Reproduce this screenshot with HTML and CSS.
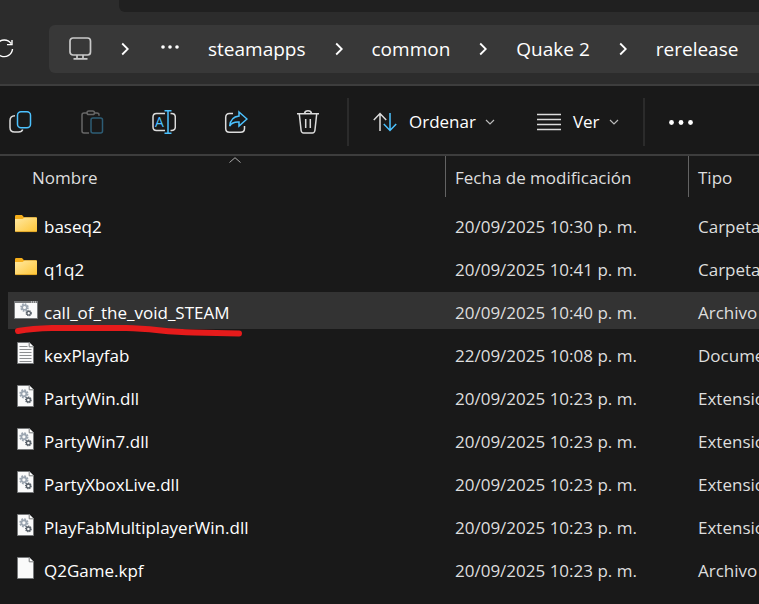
FILE: index.html
```html
<!DOCTYPE html>
<html lang="es">
<head>
<meta charset="utf-8">
<meta name="viewport" content="width=device-width, initial-scale=1">
<title>rerelease</title>
<link rel="stylesheet" href="styles.css">
</head>
<body>
<svg class="defs" aria-hidden="true">
  <symbol id="chevron" viewBox="0 0 8 14"><path d="M1.2 1.5 6.8 7 1.2 12.5" fill="none" stroke="currentColor" stroke-width="1.8"/></symbol>
  <symbol id="down" viewBox="0 0 10 6"><path d="M1 1l4 4 4-4" fill="none" stroke="currentColor" stroke-width="1.2"/></symbol>
  <symbol id="gears" viewBox="0 0 12 14">
    <circle cx="4.5" cy="4.5" r="3.2" fill="none" stroke="#9ba5b0" stroke-width="2.2" stroke-dasharray="1.5 1"/>
    <circle cx="4.5" cy="4.5" r="2.3" fill="none" stroke="#9ba5b0" stroke-width="1.6"/>
    <circle cx="8.7" cy="10.2" r="2.4" fill="none" stroke="#586069" stroke-width="1.5" stroke-dasharray="1.1 .7"/>
    <circle cx="8.7" cy="10.2" r="1.8" fill="none" stroke="#586069" stroke-width="1.2"/>
  </symbol>
  <symbol id="folder" viewBox="0 0 24 24">
    <path d="M1 4.2Q1 3 2.2 3H8l2 2.2h12q1 0 1 1V12H1z" fill="#f5ae1b"/>
    <path d="M1 7h7.5L10.500 5.500H22q1 0 1 1V19q0 1-1 1H2q-1 0-1-1z" fill="url(#folderFill)"/>
    <path d="M1.500 19.600h21" stroke="#d99c1e" stroke-width=".8"/>
  </symbol>
  <symbol id="page" viewBox="0 0 24 24">
    <path d="M3.500 1.500h12l4 4v17h-16z" fill="#fafafa" stroke="#77797b"/>
    <path d="M15.200 1.500v4.300h4.300" fill="#fff" stroke="#77797b"/>
  </symbol>
  <symbol id="text" viewBox="0 0 24 24">
    <use href="#page"/>
    <path d="M5.500 5.500h8M5.500 8.500h12M5.500 11.500h12M5.500 14.500h12M5.500 17.500h12M5.500 20.500h12" stroke="#8b8d8f"/>
  </symbol>
  <symbol id="dll" viewBox="0 0 24 24"><use href="#page"/><use href="#gears" x="5" y="5" width="13" height="15"/></symbol>
  <symbol id="batch" viewBox="0 0 24 24">
    <path d="M.5 3.500h23v17H.5z" fill="#fafafa" stroke="#77797b"/>
    <path d="M0 4h24" stroke="#77797b" stroke-width="2"/>
    <path d="M17 4h1m1 0h1m1 0h1" stroke="#eee"/>
    <use href="#gears" x="6" y="5" width="12" height="14"/>
  </symbol>
  <linearGradient id="folderFill" x1="0" y1="0" x2="1" y2="1"><stop offset="0" stop-color="#ffe9a3"/><stop offset="1" stop-color="#fec535"/></linearGradient>
</svg>

<header class="top">
  <div class="tabs"><div class="tabs-empty"></div></div>
  <div class="nav">
    <button class="refresh" aria-label="Actualizar">
      <svg width="14" height="24" viewBox="0 0 14 24" fill="none" stroke="#fff" stroke-width="1.400"><path d="M11 6.500A8.300 8.300 0 1 0 12.500 12M12 3v4.600H7"/></svg>
    </button>
    <nav class="address" aria-label="Ruta">
      <button class="crumb" aria-label="Este equipo"><svg width="24" height="24" viewBox="0 0 24 24" fill="none" stroke="#c9c9c9" stroke-width="1.700"><rect x="2" y="1" width="20.500" height="17" rx="3"/><path d="M9 18v3M15 18v3M5.500 21.800h14"/></svg></button>
      <svg class="sep"><use href="#chevron"/></svg>
      <button class="crumb more" aria-label="Mostrar carpetas"><svg width="18" height="6" fill="#fff"><circle cx="2" cy="3" r="1.800"/><circle cx="9" cy="3" r="1.800"/><circle cx="16" cy="3" r="1.800"/></svg></button>
      <a class="crumb" href="#">steamapps</a>
      <svg class="sep"><use href="#chevron"/></svg>
      <a class="crumb" href="#">common</a>
      <svg class="sep"><use href="#chevron"/></svg>
      <a class="crumb" href="#">Quake 2</a>
      <svg class="sep"><use href="#chevron"/></svg>
      <a class="crumb" href="#">rerelease</a>
    </nav>
  </div>
</header>

<div class="toolbar" role="toolbar" aria-label="Comandos">
  <div class="group icons">
    <button aria-label="Copiar"><svg class="ico"><path d="M7 5.800Q2 6 2 10.500v7Q2 22 6.500 22h4q3.500 0 4.200-2.500"/><rect class="blue" x="9.500" y="1.800" width="13" height="16" rx="3.500"/></svg></button>
    <button class="off" aria-label="Pegar" disabled><svg class="ico"><path d="M7 3H4Q2 3 2 5v16q0 2 2 2h5M14.500 3H17q2 0 2 2v.800"/><rect x="7" y="1" width="7.500" height="3.600" rx="1.800"/><rect class="blue" x="11" y="8" width="11.500" height="15" rx="2"/></svg></button>
    <button aria-label="Cambiar nombre"><svg class="ico"><path d="M13 3.500H4.500Q1 3.500 1 7v10q0 3.500 3.500 3.500H13M18.500 3.500h1Q23.300 3.500 23.300 7v10q0 3.500-3.800 3.500h-1"/><path class="blue" d="M12.500.8h7M16 .8v22.400M12.500 23.200h7"/><text x="3" y="17">A</text></svg></button>
    <button aria-label="Compartir"><svg class="ico"><path d="M9 3.600H5.500Q1.700 3.600 1.700 7.500v11q0 3.800 3.800 3.800h11q4 0 4-3.800V16"/><path class="blue" d="M15 2l8 7L15 16v-4q-6.500-.5-9.300 4Q6.500 7 15 6z"/></svg></button>
    <button aria-label="Eliminar"><svg class="ico"><path d="M1 3.700h22M8.500 3.500q.5-2.700 3.500-2.700t3.500 2.700M3.300 4l1.800 16.500q.4 2.500 2.500 2.500h8.800q2.100 0 2.500-2.500L20.700 4M9.700 9v9M14.300 9v9"/></svg></button>
  </div>
  <div class="group">
    <button><svg class="ico"><path d="M7 21V3.500M.8 10 7 3.500l6.200 6.500"/><path class="blue" d="M17 3v17.500M10.800 14l6.200 6.500 6.200-6.500"/></svg><span>Ordenar</span><svg class="down"><use href="#down"/></svg></button>
    <button><svg class="ico"><path d="M0 4.500h24M0 9.500h24M0 14.500h24M0 19.500h24"/></svg><span>Ver</span><svg class="down"><use href="#down"/></svg></button>
  </div>
  <div class="group">
    <button aria-label="Ver más"><svg class="ico dots"><circle cx="2.500" cy="12.500" r="2.400"/><circle cx="12" cy="12.500" r="2.400"/><circle cx="21.500" cy="12.500" r="2.400"/></svg></button>
  </div>
</div>

<main class="files">
  <table>
    <colgroup><col class="col-name"><col class="col-date"><col></colgroup>
    <thead>
      <tr>
        <th class="sorted" aria-sort="ascending"><div class="head">Nombre</div><svg class="caret" viewBox="0 0 12 6"><path d="M.5 5.500 6 .700l5.500 4.800" fill="none" stroke="#aaa"/></svg></th>
        <th><div class="head">Fecha de modificación</div></th>
        <th><div class="head">Tipo</div></th>
      </tr>
    </thead>
    <tbody>
      <tr><td><div class="name"><svg><use href="#folder"/></svg>baseq2</div></td><td>20/09/2025 10:30 p. m.</td><td>Carpeta</td></tr>
      <tr><td><div class="name"><svg><use href="#folder"/></svg>q1q2</div></td><td>20/09/2025 10:41 p. m.</td><td>Carpeta</td></tr>
      <tr class="selected"><td><div class="name"><svg><use href="#batch"/></svg>call_of_the_void_STEAM</div><svg class="mark" viewBox="0 0 230 14"><path d="M4 8Q18 5.500 38 5H112C140 5.500 150 9 180 9.500L225 10.500" fill="none" stroke="#e61b1b" stroke-width="6" stroke-linecap="round"/></svg></td><td>20/09/2025 10:40 p. m.</td><td>Archivo</td></tr>
      <tr><td><div class="name"><svg><use href="#text"/></svg>kexPlayfab</div></td><td>22/09/2025 10:08 p. m.</td><td>Documento</td></tr>
      <tr><td><div class="name"><svg><use href="#dll"/></svg>PartyWin.dll</div></td><td>20/09/2025 10:23 p. m.</td><td>Extensión</td></tr>
      <tr><td><div class="name"><svg><use href="#dll"/></svg>PartyWin7.dll</div></td><td>20/09/2025 10:23 p. m.</td><td>Extensión</td></tr>
      <tr><td><div class="name"><svg><use href="#dll"/></svg>PartyXboxLive.dll</div></td><td>20/09/2025 10:23 p. m.</td><td>Extensión</td></tr>
      <tr><td><div class="name"><svg><use href="#dll"/></svg>PlayFabMultiplayerWin.dll</div></td><td>20/09/2025 10:23 p. m.</td><td>Extensión</td></tr>
      <tr><td><div class="name"><svg><use href="#page"/></svg>Q2Game.kpf</div></td><td>20/09/2025 10:23 p. m.</td><td>Archivo</td></tr>
    </tbody>
  </table>
</main>
</body>
</html>
```
FILE: styles.css
```css
* { box-sizing: border-box; }

body {
  margin: 0;
  min-height: 100vh;
  overflow-x: hidden;
  background: #191919;
  color: #fff;
  font: 17px/24px "Open Sans", "Noto Sans", sans-serif;
}

svg { display: block; flex: none; }
.defs { position: absolute; width: 0; height: 0; }

button {
  display: flex;
  align-items: center;
  gap: 12px;
  padding: 0;
  border: 0;
  background: none;
  color: inherit;
  font: inherit;
}

.top { background: #2c2c2c; border-bottom: 2px solid #3d3d3d; }
.tabs { padding-left: 119px; }
.tabs-empty { height: 12px; background: #202020; border-bottom-left-radius: 6px; }
.nav { display: flex; padding: 13px 0 11px; }
.refresh { width: 49px; }

.address {
  flex: 1;
  display: flex;
  align-items: center;
  gap: 29px;
  height: 48px;
  padding-left: 19px;
  background: #383838;
  border-radius: 6px 0 0 6px;
  font-size: 19px;
  white-space: nowrap;
}
.crumb { color: #fff; text-decoration: none; }
.more { padding: 0 0 4px 3px; }
.sep { width: 8px; height: 14px; }

.toolbar {
  display: flex;
  align-items: center;
  height: 70px;
  padding-top: 4px;
  border-bottom: 2px solid #3d3d3d;
}
.group {
  display: flex;
  align-items: center;
  gap: 42px;
  height: 48px;
  padding: 0 24px;
}
.group + .group { border-left: 2px solid #2b2b2b; }
.icons { gap: 48px; padding: 0 27px 0 8px; }
.ico { width: 24px; height: 24px; fill: none; stroke: #dcdcdc; stroke-width: 1.5; }
.ico .blue { stroke: #4cc2ff; }
.ico text { fill: #4cc2ff; stroke: none; font-size: 14px; }
.ico.dots { fill: #fff; stroke: none; }
.off { opacity: .4; }
.down { width: 10px; height: 6px; margin-left: -3px; color: #bbb; }

.files { overflow: hidden; padding-left: 8px; }
table { width: 100%; table-layout: fixed; border-spacing: 0; }
.col-name { width: 438px; }
.col-date { width: 243px; }

th { height: 47px; padding: 0; text-align: left; vertical-align: top; font-weight: 400; color: #dedede; }
.head { height: 41px; padding-left: 9px; line-height: 43px; border-right: 1px solid #636363; }
th:last-child .head { border-right: 0; }
.sorted { position: relative; }
.sorted .head { padding-left: 24px; }
.caret { position: absolute; top: 1px; left: 221px; width: 12px; height: 6px; }

td {
  height: 43px;
  padding: 4px 0 0 9px;
  border: solid transparent;
  border-width: 3px 0;
  background-clip: padding-box;
  color: #dedede;
  white-space: nowrap;
}
td:first-child { position: relative; padding: 4px 0 0 6px; color: #fff; }
.name { display: flex; align-items: center; gap: 6px; line-height: 24px; }
.name svg { width: 24px; height: 24px; margin: -3px 0 3px; }
.selected td { background-color: #333; }
.selected td:first-child { border-radius: 3px 0 0 3px; }
.mark { position: absolute; z-index: 1; top: 31px; left: 6px; width: 230px; height: 14px; }
```
